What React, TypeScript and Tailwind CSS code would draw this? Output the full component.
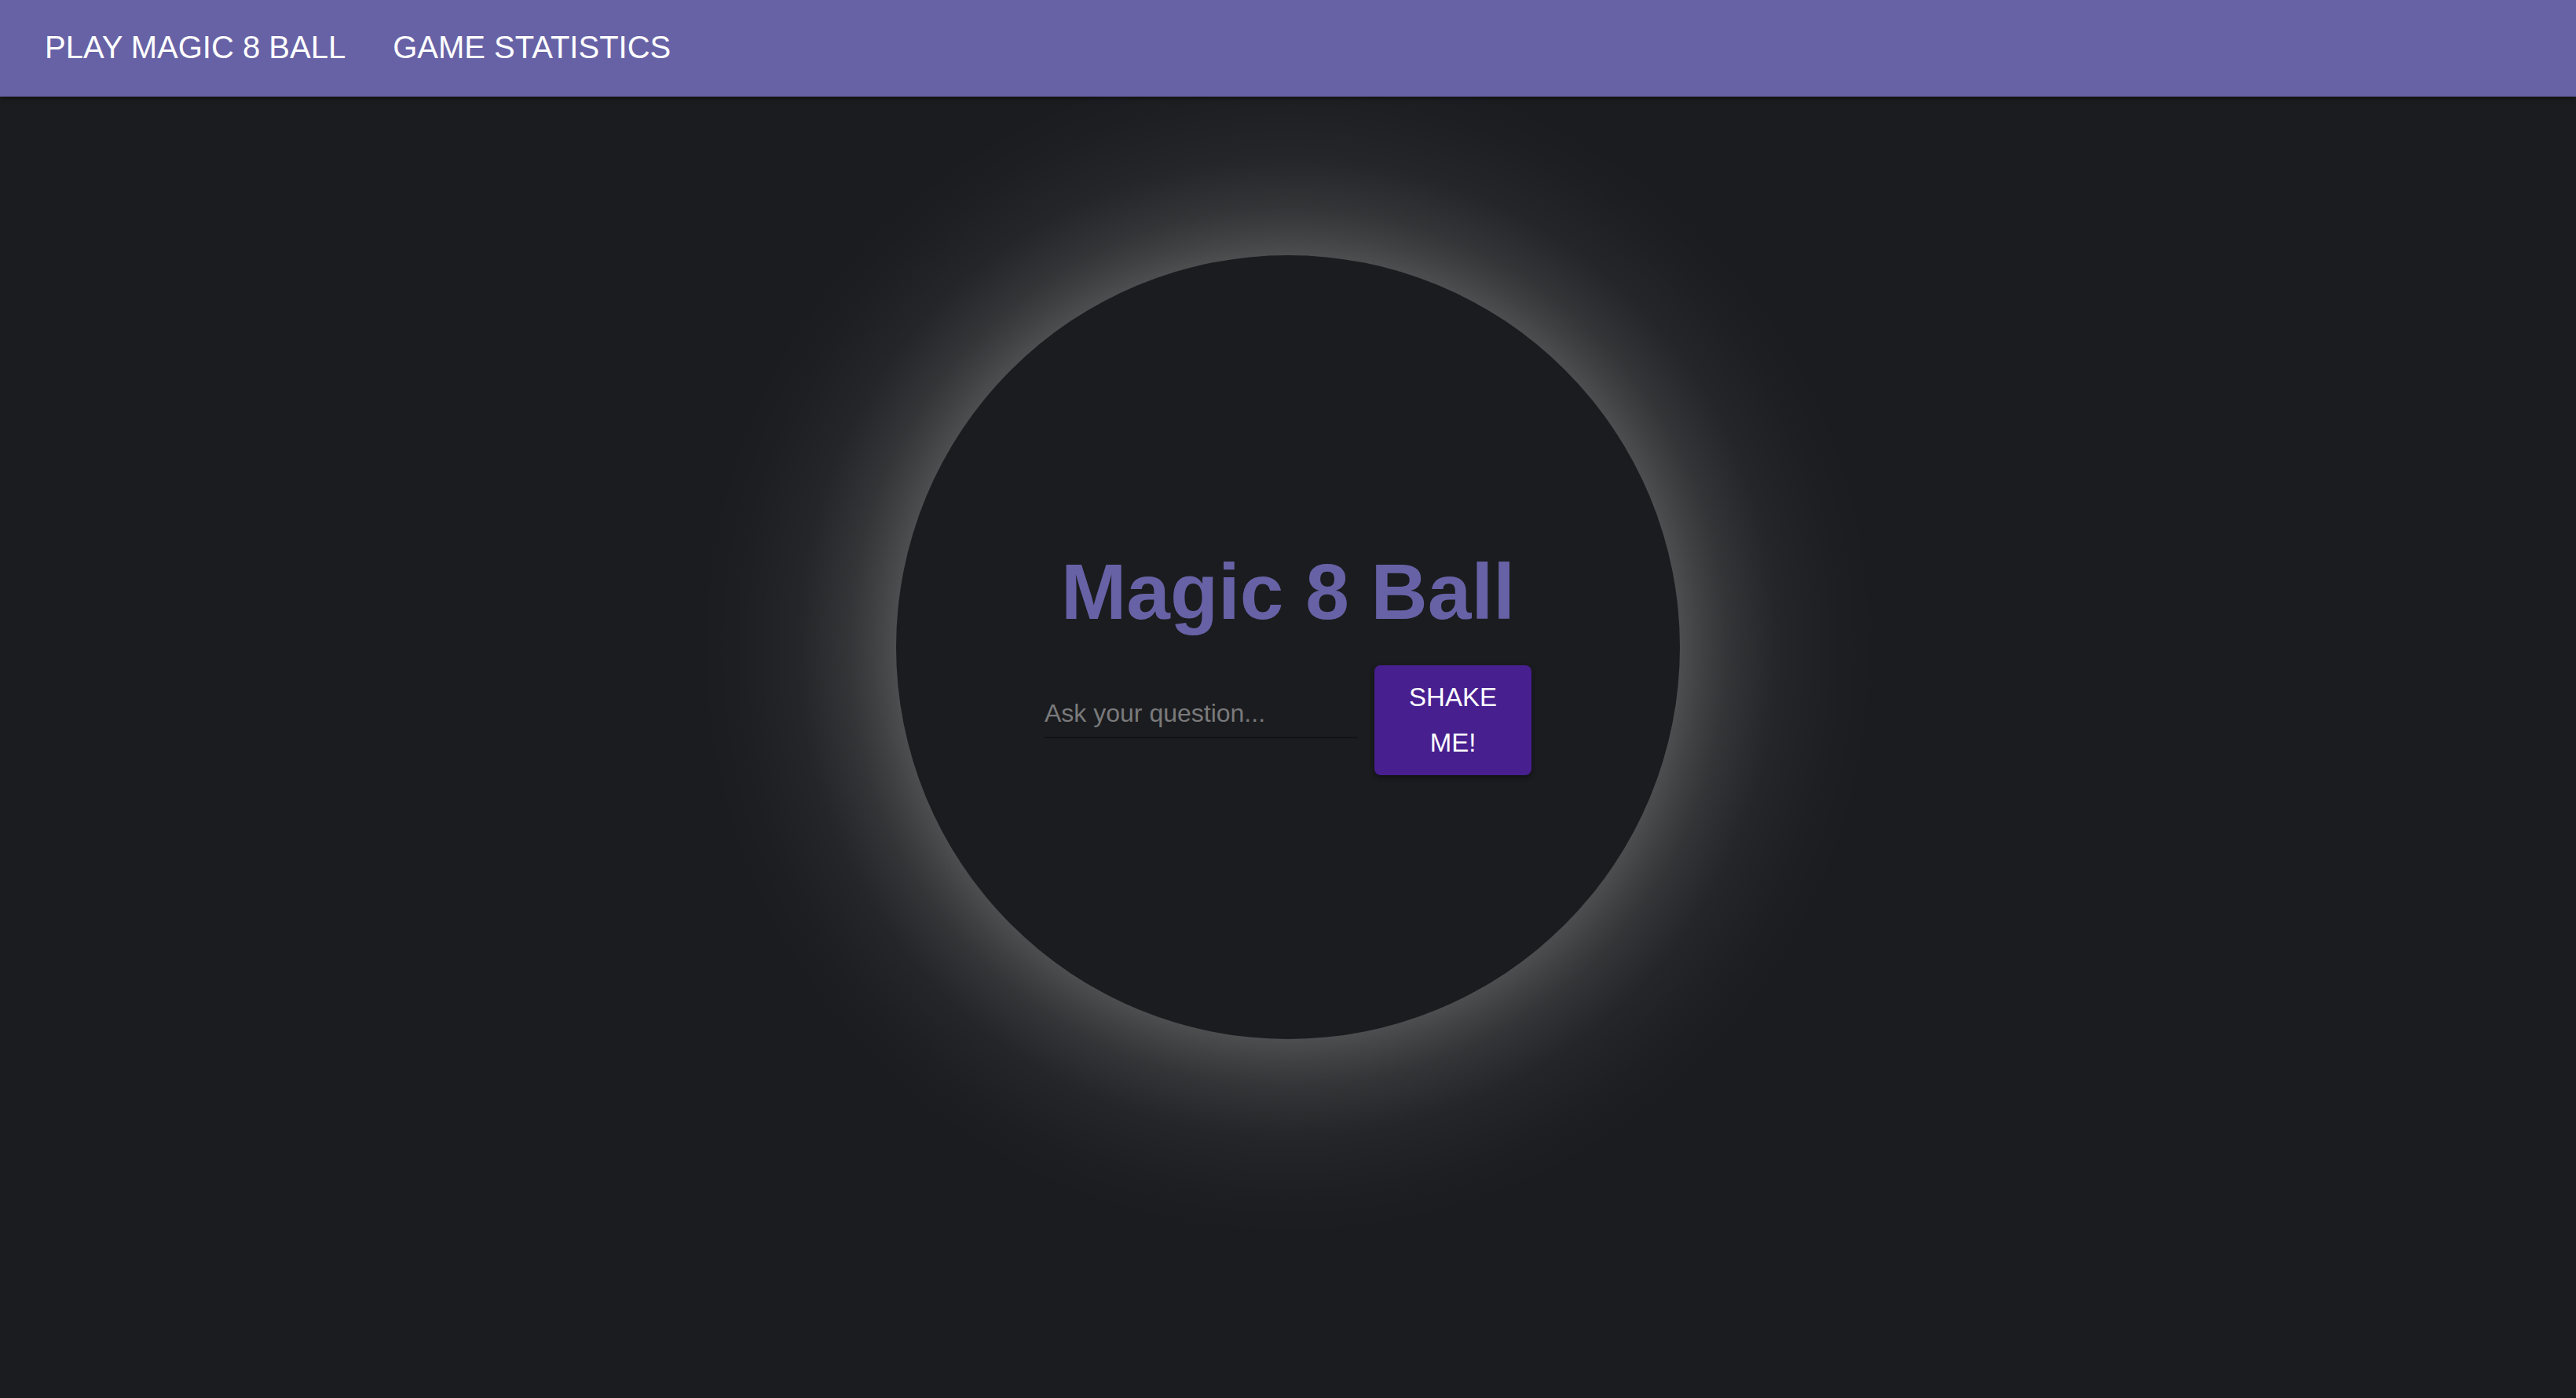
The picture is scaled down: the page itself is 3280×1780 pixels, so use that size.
import { useState } from "react";

export default function App() {
  const [question, setQuestion] = useState("");

  return (
    <div className="min-h-[1780px] bg-[#1b1c1f] overflow-hidden font-['Liberation_Sans',Arial,sans-serif]">
      <nav className="h-[123px] bg-[#6762a6] flex items-center pl-[57px] pb-[4px] gap-[60px] shadow-[0_2px_6px_rgba(0,0,0,0.45)] relative z-10">
        <a href="#" className="text-[40px] leading-none text-white">
          PLAY MAGIC 8 BALL
        </a>
        <a href="#" className="text-[40px] leading-none text-white">
          GAME STATISTICS
        </a>
      </nav>

      <main className="flex justify-center pt-[202px]">
        {/* glow around the ball */}
        <div className="-m-[300px] p-[300px] bg-[radial-gradient(circle_closest-side,rgba(255,255,255,0.22)_62.4%,rgba(255,255,255,0.16)_66.2%,rgba(255,255,255,0.11)_70%,rgba(255,255,255,0.045)_78%,rgba(255,255,255,0.01)_87.5%,transparent_94%)]">
          <div className="size-[998px] rounded-full bg-[#1b1c1f] flex flex-col items-center justify-center pt-[26px]">
            <h1 className="mt-[6px] text-[100px] leading-[120px] font-bold text-[#6762a6]">
              Magic 8 Ball
            </h1>
            <form
              className="mt-[34px] flex items-start gap-[21px]"
              onSubmit={(event) => event.preventDefault()}
            >
              <input
                value={question}
                onChange={(event) => setQuestion(event.target.value)}
                placeholder="Ask your question..."
                className="mt-[31px] w-[399px] h-[62px] bg-transparent border-b-2 border-[#111214] text-[32px] text-white placeholder-[#7a7a7c] outline-none"
              />
              <button
                type="submit"
                className="w-[200px] h-[140px] px-[32px] rounded-[8px] bg-[#471f8f] text-white text-[33px] leading-[58px] shadow-[0_3px_6px_rgba(0,0,0,0.4)]"
              >
                SHAKE ME!
              </button>
            </form>
          </div>
        </div>
      </main>
    </div>
  );
}
